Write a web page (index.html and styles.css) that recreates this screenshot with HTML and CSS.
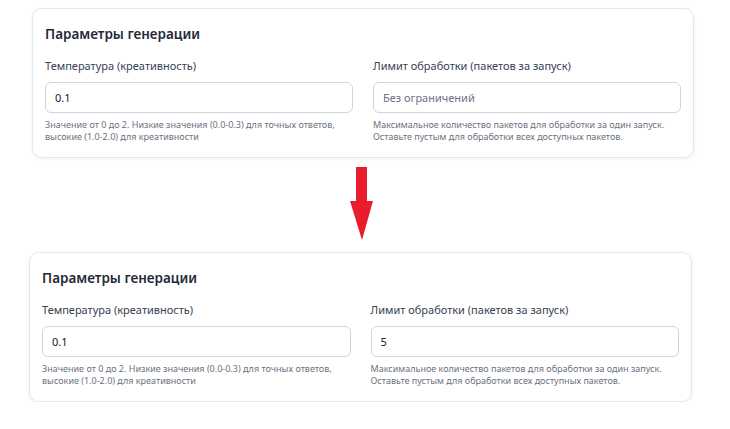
FILE: index.html
```html
<!DOCTYPE html>
<html>
  <head>
    <link rel="stylesheet" href="styles.css">
  </head>
  <body>
    <div class="card card-before">
      <h3>Параметры генерации</h3>
      <div class="fields">
        <div class="field">
          <label>Температура (креативность)</label>
          <input class="input" type="text" value="0.1">
          <div class="help">
            Значение от 0 до 2. Низкие значения (0.0-0.3) для точных ответов,
            высокие (1.0-2.0) для креативности
          </div>
        </div>
        <div class="field">
          <label>Лимит обработки (пакетов за запуск)</label>
          <input class="input" type="text" placeholder="Без ограничений">
          <div class="help">
            Максимальное количество пакетов для обработки за один запуск.
            Оставьте пустым для обработки всех доступных пакетов.
          </div>
        </div>
      </div>
    </div>

    <div class="arrow">
      <svg width="24" height="74" viewBox="0 0 24 74">
        <rect x="6" y="0" width="11" height="36" fill="#e81c2c" />
        <polygon points="0,34 23,34 12,73" fill="#e81c2c" />
      </svg>
    </div>

    <div class="card card-after">
      <h3>Параметры генерации</h3>
      <div class="fields">
        <div class="field">
          <label>Температура (креативность)</label>
          <input class="input" type="text" value="0.1">
          <div class="help">
            Значение от 0 до 2. Низкие значения (0.0-0.3) для точных ответов,
            высокие (1.0-2.0) для креативности
          </div>
        </div>
        <div class="field">
          <label>Лимит обработки (пакетов за запуск)</label>
          <input class="input" type="text" value="5">
          <div class="help">
            Максимальное количество пакетов для обработки за один запуск.
            Оставьте пустым для обработки всех доступных пакетов.
          </div>
        </div>
      </div>
    </div>
  </body>
</html>
```

FILE: styles.css
```css
body {
  font-family: "Noto Sans", "Open Sans", sans-serif;
  margin: 0;
  padding: 8px 0 0;
  background: #ffffff;
  color: #1f2937;
}
.card {
  box-sizing: border-box;
  background: #ffffff;
  border: 1px solid #e5e7eb;
  border-radius: 10px;
  box-shadow: 0 1px 4px rgba(0, 0, 0, 0.06);
  padding: 15px 12px 14px;
}
.card-before {
  width: 662px;
  margin-left: 32px;
}
.card-after {
  width: 663px;
  margin-left: 29px;
}
.card h3 {
  margin: 0;
  font-size: 13.5px;
  line-height: 20px;
  font-weight: 600;
  color: #1f2937;
}
.fields {
  display: grid;
  grid-template-columns: 1fr 1fr;
  gap: 20px;
  margin-top: 14px;
}
.field label {
  display: block;
  font-size: 11px;
  line-height: 16px;
  color: #374151;
  margin-bottom: 8px;
}
.input {
  box-sizing: border-box;
  display: block;
  width: 100%;
  height: 31px;
  padding: 0 9px;
  border: 1px solid #d1d5db;
  border-radius: 6px;
  font-family: inherit;
  font-size: 11px;
  color: #111827;
  background: #ffffff;
  outline: none;
}
.input::placeholder {
  color: #6b7280;
}
.help {
  margin-top: 6px;
  font-size: 9px;
  line-height: 12px;
  color: #6b7280;
}
.arrow {
  display: flex;
  justify-content: center;
  width: 24px;
  margin: 9px 0 11px 350px;
  height: 74px;
}
.arrow svg {
  display: block;
}
```
